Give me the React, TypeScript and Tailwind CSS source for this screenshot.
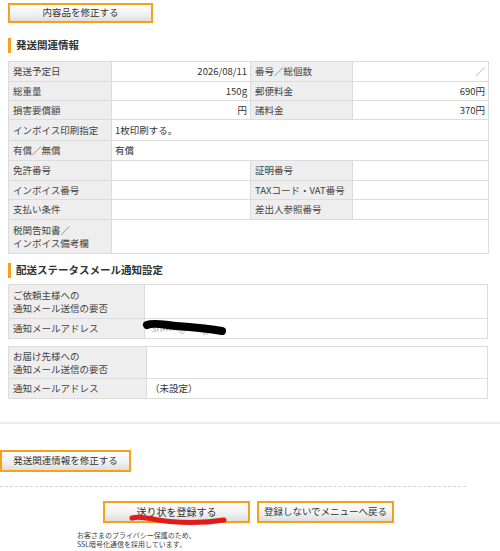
import React from "react";

const font = { fontFamily: '"Noto Sans CJK JP", "Noto Sans", sans-serif' };

function OrangeButton({ children, className = "" }: { children: React.ReactNode; className?: string }) {
  return (
    <button
      className={`border-2 border-[#f7a11a] bg-gradient-to-b from-[#ffffff] via-[#f4f4f4] to-[#dedede] text-[#333] leading-none flex items-center justify-center ${className}`}
    >
      {children}
    </button>
  );
}

function SectionTitle({ children }: { children: React.ReactNode }) {
  return (
    <div className="flex items-center h-[15px] ml-2">
      <div className="w-[3px] h-[15px] bg-[#f7a11a]" />
      <span className="ml-[5px] text-[10.5px] font-bold text-[#333] leading-none">{children}</span>
    </div>
  );
}

const lab = "bg-[#eeeeee] border border-[#dcdcdc] px-[4px] text-left align-middle font-normal text-[#444]";
const val = "bg-white border border-[#dcdcdc] px-[3px] align-middle text-[#333]";

export default function App() {
  return (
    <div style={font} className="w-[500px] h-[551px] bg-white text-[9.5px] relative overflow-hidden">
      <div className="pt-[3px] pl-2">
        <OrangeButton className="w-[145px] h-[20px] text-[9.5px]">内容品を修正する</OrangeButton>
      </div>

      <div className="mt-[15px]">
        <SectionTitle>発送関連情報</SectionTitle>
      </div>

      <table className="ml-2 mt-[8px] w-[480px] border-collapse table-fixed leading-[11px]">
        <colgroup>
          <col className="w-[103px]" />
          <col className="w-[139px]" />
          <col className="w-[102px]" />
          <col className="w-[136px]" />
        </colgroup>
        <tbody>
          <tr className="h-[20px]">
            <th className={lab}>発送予定日</th>
            <td className={`${val} text-right`}>2026/08/11</td>
            <th className={lab}>番号／総個数</th>
            <td className={`${val} text-right text-[#777]`}>／</td>
          </tr>
          <tr className="h-[19px]">
            <th className={lab}>総重量</th>
            <td className={`${val} text-right`}>150g</td>
            <th className={lab}>郵便料金</th>
            <td className={`${val} text-right`}>690円</td>
          </tr>
          <tr className="h-[19px]">
            <th className={lab}>損害要償額</th>
            <td className={`${val} text-right`}>円</td>
            <th className={lab}>諸料金</th>
            <td className={`${val} text-right`}>370円</td>
          </tr>
          <tr className="h-[21px]">
            <th className={lab}>インボイス印刷指定</th>
            <td className={val} colSpan={3}>1枚印刷する。</td>
          </tr>
          <tr className="h-[20px]">
            <th className={lab}>有償／無償</th>
            <td className={val} colSpan={3}>有償</td>
          </tr>
          <tr className="h-[20px]">
            <th className={lab}>免許番号</th>
            <td className={val}></td>
            <th className={lab}>証明番号</th>
            <td className={val}></td>
          </tr>
          <tr className="h-[19px]">
            <th className={lab}>インボイス番号</th>
            <td className={val}></td>
            <th className={lab}>TAXコード・VAT番号</th>
            <td className={val}></td>
          </tr>
          <tr className="h-[20px]">
            <th className={lab}>支払い条件</th>
            <td className={val}></td>
            <th className={lab}>差出人参照番号</th>
            <td className={val}></td>
          </tr>
          <tr className="h-[34px]">
            <th className={`${lab} leading-[13px]`}>
              税関告知書／
              <br />
              インボイス備考欄
            </th>
            <td className={val} colSpan={3}></td>
          </tr>
        </tbody>
      </table>

      <div className="mt-[9px]">
        <SectionTitle>配送ステータスメール通知設定</SectionTitle>
      </div>

      <table className="ml-2 mt-[6px] w-[480px] border-collapse table-fixed leading-[13px]">
        <colgroup>
          <col className="w-[136px]" />
          <col />
        </colgroup>
        <tbody>
          <tr className="h-[34px]">
            <th className={lab}>
              ご依頼主様への
              <br />
              通知メール送信の要否
            </th>
            <td className={val}></td>
          </tr>
          <tr className="h-[20px]">
            <th className={lab}>通知メールアドレス</th>
            <td className={`${val} relative`}>
              <span className="text-[#aaa] pl-[4px]">sh•••••@••••.jp</span>
              <svg className="absolute left-[-3px] top-[0px]" width="86" height="18" viewBox="0 0 86 18">
                <path
                  d="M5 6 C 12 3, 22 6, 34 7 C 48 8, 62 9, 80 12"
                  stroke="#000"
                  strokeWidth="8"
                  strokeLinecap="round"
                  fill="none"
                />
              </svg>
            </td>
          </tr>
        </tbody>
      </table>

      <table className="ml-2 mt-[7px] w-[480px] border-collapse table-fixed leading-[13px]">
        <colgroup>
          <col className="w-[138px]" />
          <col />
        </colgroup>
        <tbody>
          <tr className="h-[32px]">
            <th className={lab}>
              お届け先様への
              <br />
              通知メール送信の要否
            </th>
            <td className={val}></td>
          </tr>
          <tr className="h-[20px]">
            <th className={lab}>通知メールアドレス</th>
            <td className={val}>（未設定）</td>
          </tr>
        </tbody>
      </table>

      <div className="mt-[23px] h-[2px] bg-[#ececec] w-full" />

      <div className="mt-[26px]">
        <OrangeButton className="w-[131px] h-[22px] text-[9.5px]">発送関連情報を修正する</OrangeButton>
      </div>

      <div className="mt-[14px] w-[466px] border-t border-dashed border-[#d4d4d4]" />

      <div className="mt-[14px] flex items-start">
        <div className="ml-[103px] relative">
          <OrangeButton className="w-[147px] h-[22px] text-[10px]">送り状を登録する</OrangeButton>
          <svg className="absolute left-[26px] top-[12px]" width="100" height="14" viewBox="0 0 100 14">
            <path
              d="M3 5 C 14 2, 22 7, 40 8.5 C 58 10, 80 9.5, 95 7"
              stroke="#e11b1b"
              strokeWidth="5"
              strokeLinecap="round"
              fill="none"
            />
          </svg>
        </div>
        <div className="ml-[7px]">
          <OrangeButton className="w-[137px] h-[22px] text-[9.5px]">登録しないでメニューへ戻る</OrangeButton>
        </div>
      </div>

      <div className="ml-[77px] mt-[8px] text-[7px] leading-[9px] text-[#444]">
        <div>お客さまのプライバシー保護のため、</div>
        <div>SSL暗号化通信を採用しています。</div>
      </div>
    </div>
  );
}
